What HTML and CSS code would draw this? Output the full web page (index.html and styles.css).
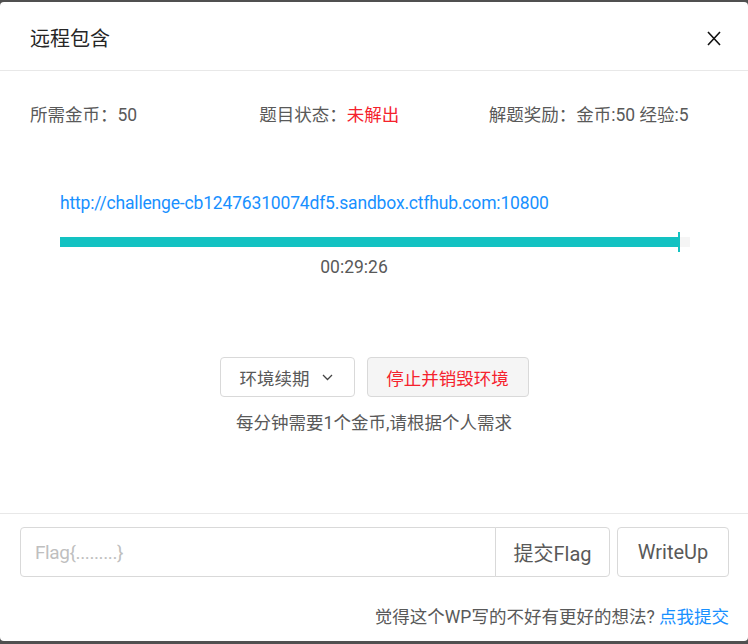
FILE: index.html
```html
<!DOCTYPE html>
<html lang="zh-CN">
<head>
    <meta charset="UTF-8">
    <meta name="viewport" content="width=device-width, initial-scale=1.0">
    <title>远程包含</title>
    <link rel="stylesheet" href="styles.css">
</head>
<body>
    <div class="modal">
        <header class="modal-header">
            <h1 class="modal-title">远程包含</h1>
            <span class="close">
                <svg width="14" height="15" viewBox="0 0 14 15"><path d="M1 1 L13 14 M13 1 L1 14" stroke="#111" stroke-width="1.6" fill="none"/></svg>
            </span>
        </header>
        <main class="modal-body">
            <div class="info">
                <span>所需金币：50</span>
                <span>题目状态：<b class="unsolved">未解出</b></span>
                <span>解题奖励：金币:50 经验:5</span>
            </div>
            <div class="env">
                <a class="env-url" href="#">http://challenge-cb12476310074df5.sandbox.ctfhub.com:10800</a>
                <div class="progress">
                    <div class="progress-bar" style="width: 98.1%"></div>
                </div>
                <p class="time">00:29:26</p>
            </div>
            <div class="actions">
                <button class="btn btn-select">环境续期
                    <svg width="11" height="7" viewBox="0 0 11 7"><path d="M1 1 L5.5 5.5 L10 1" stroke="#444" stroke-width="1.3" fill="none"/></svg>
                </button>
                <button class="btn btn-stop">停止并销毁环境</button>
            </div>
            <p class="hint">每分钟需要1个金币,请根据个人需求</p>
        </main>
        <footer class="modal-footer">
            <div class="flag-row">
                <div class="flag-group">
                    <input type="text" class="flag-input" placeholder="Flag{.........}">
                    <button class="btn btn-submit">提交Flag</button>
                </div>
                <button class="btn btn-wp">WriteUp</button>
            </div>
            <p class="wp-tip">觉得这个WP写的不好有更好的想法? <a href="#">点我提交</a></p>
        </footer>
    </div>
</body>
</html>
```

FILE: styles.css
```css
body {
    margin: 0;
    background-color: #505050;
    font-family: Roboto, "Noto Sans CJK SC", sans-serif;
    font-size: 17.5px;
    color: #595959;
}

.modal {
    margin-top: 2px;
    height: 639px;
    background-color: #fff;
    border-radius: 4px;
    display: flex;
    flex-direction: column;
}

.modal-header {
    height: 68px;
    padding: 0 27px 0 30px;
    display: flex;
    align-items: center;
    justify-content: space-between;
    border-bottom: 1px solid #e8e8e8;
}
.modal-title {
    margin: 2px 0 0;
    font-size: 20px;
    font-weight: normal;
    color: #262626;
}
.close {
    display: flex;
    margin-top: 4px;
}

.modal-body {
    flex: 1;
}

.info {
    margin-top: 31px;
    padding: 0 30px;
    display: grid;
    grid-template-columns: 1fr 1fr 1fr;
    line-height: 26px;
}
.unsolved {
    font-weight: normal;
    color: #f5222d;
}

.env {
    margin-top: 62px;
    padding: 0 58px 0 60px;
}
.env-url {
    display: block;
    line-height: 26px;
    letter-spacing: -0.17px;
    color: #1890ff;
    text-decoration: none;
}
.progress {
    margin-top: 21px;
    height: 10px;
    background-color: #f5f5f5;
}
.progress-bar {
    position: relative;
    height: 100%;
    background-color: #13c2c2;
}
.progress-bar::after {
    content: "";
    position: absolute;
    right: -2px;
    top: -5px;
    width: 2px;
    height: 20px;
    background-color: #13c2c2;
}
.time {
    margin: 7px 42px 0 0;
    line-height: 26px;
    text-align: center;
}

.actions {
    margin-top: 77px;
    display: flex;
    justify-content: center;
    gap: 12px;
}
.btn {
    font-family: inherit;
    font-size: 17.5px;
    color: #595959;
    background-color: #fff;
    border: 1px solid #d9d9d9;
    border-radius: 4px;
    cursor: pointer;
}
.btn-select {
    width: 135px;
    height: 40px;
    display: flex;
    align-items: center;
    justify-content: center;
    gap: 12px;
    padding: 0 2px 0 0;
}
.btn-stop {
    width: 162px;
    height: 40px;
    padding: 0;
    background-color: #f5f5f5;
    color: #f5222d;
}
.hint {
    margin: 13px 0 0;
    line-height: 26px;
    text-align: center;
}

.modal-footer {
    border-top: 1px solid #e8e8e8;
    padding: 13px 19px 11px 20px;
}
.flag-row {
    display: flex;
    gap: 7px;
}
.flag-group {
    flex: 1;
    display: flex;
}
.flag-input {
    flex: 1;
    height: 50px;
    box-sizing: border-box;
    padding: 0 14px;
    font-family: inherit;
    font-size: 19px;
    letter-spacing: -0.4px;
    border: 1px solid #d9d9d9;
    border-radius: 4px 0 0 4px;
    outline: none;
}
.flag-input::placeholder {
    color: #bfbfbf;
}
.btn-submit {
    width: 115px;
    height: 50px;
    margin-left: -1px;
    padding: 0;
    font-size: 20px;
    border-radius: 0 4px 4px 0;
}
.btn-wp {
    width: 112px;
    height: 50px;
    padding: 0;
    font-size: 20px;
}
.wp-tip {
    margin: 27px 0 0;
    line-height: 26px;
    text-align: right;
}
.wp-tip a {
    color: #1890ff;
    text-decoration: none;
}
```
